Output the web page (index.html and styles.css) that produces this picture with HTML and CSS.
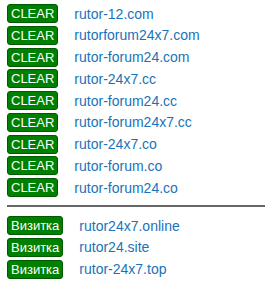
FILE: index.html
```html
<!DOCTYPE html>
<html lang="ru">
<head>
  <meta charset="UTF-8" />
  <title>Зеркала</title>
  <link rel="stylesheet" href="styles.css">
</head>
<body>
  <div class="mirrors">
    <div class="row"><button class="btn">CLEAR</button><a href="#">rutor-12.com</a></div>
    <div class="row"><button class="btn">CLEAR</button><a href="#">rutorforum24x7.com</a></div>
    <div class="row"><button class="btn">CLEAR</button><a href="#">rutor-forum24.com</a></div>
    <div class="row"><button class="btn">CLEAR</button><a href="#">rutor-24x7.cc</a></div>
    <div class="row"><button class="btn">CLEAR</button><a href="#">rutor-forum24.cc</a></div>
    <div class="row"><button class="btn">CLEAR</button><a href="#">rutor-forum24x7.cc</a></div>
    <div class="row"><button class="btn">CLEAR</button><a href="#">rutor-24x7.co</a></div>
    <div class="row"><button class="btn">CLEAR</button><a href="#">rutor-forum.co</a></div>
    <div class="row"><button class="btn">CLEAR</button><a href="#">rutor-forum24.co</a></div>
  </div>
  <hr class="divider">
  <div class="mirrors">
    <div class="row"><button class="btn">Визитка</button><a href="#">rutor24x7.online</a></div>
    <div class="row"><button class="btn">Визитка</button><a href="#">rutor24.site</a></div>
    <div class="row"><button class="btn">Визитка</button><a href="#">rutor-24x7.top</a></div>
  </div>
</body>
</html>
```

FILE: styles.css
```css
body {
  font-family: "Liberation Sans", Arial, sans-serif;
  background: #fff;
  margin: 0;
  padding: 4px 11px 0 7px;
}
.mirrors {
  display: flex;
  flex-direction: column;
  gap: 2.75px;
}
.row {
  display: flex;
  align-items: center;
  gap: 16px;
  height: 19px;
}
.btn {
  font-family: "Liberation Sans", Arial, sans-serif;
  font-size: 13px;
  line-height: 15px;
  padding: 1px 3px;
  border: 1px solid #005a00;
  border-radius: 3px;
  background: #008000;
  color: #fff;
  cursor: pointer;
}
.row a {
  font-size: 14px;
  color: #1a73b8;
  text-decoration: none;
}
.divider {
  border: none;
  border-top: 2px solid #666;
  margin: 8px 0 9px;
}
```
